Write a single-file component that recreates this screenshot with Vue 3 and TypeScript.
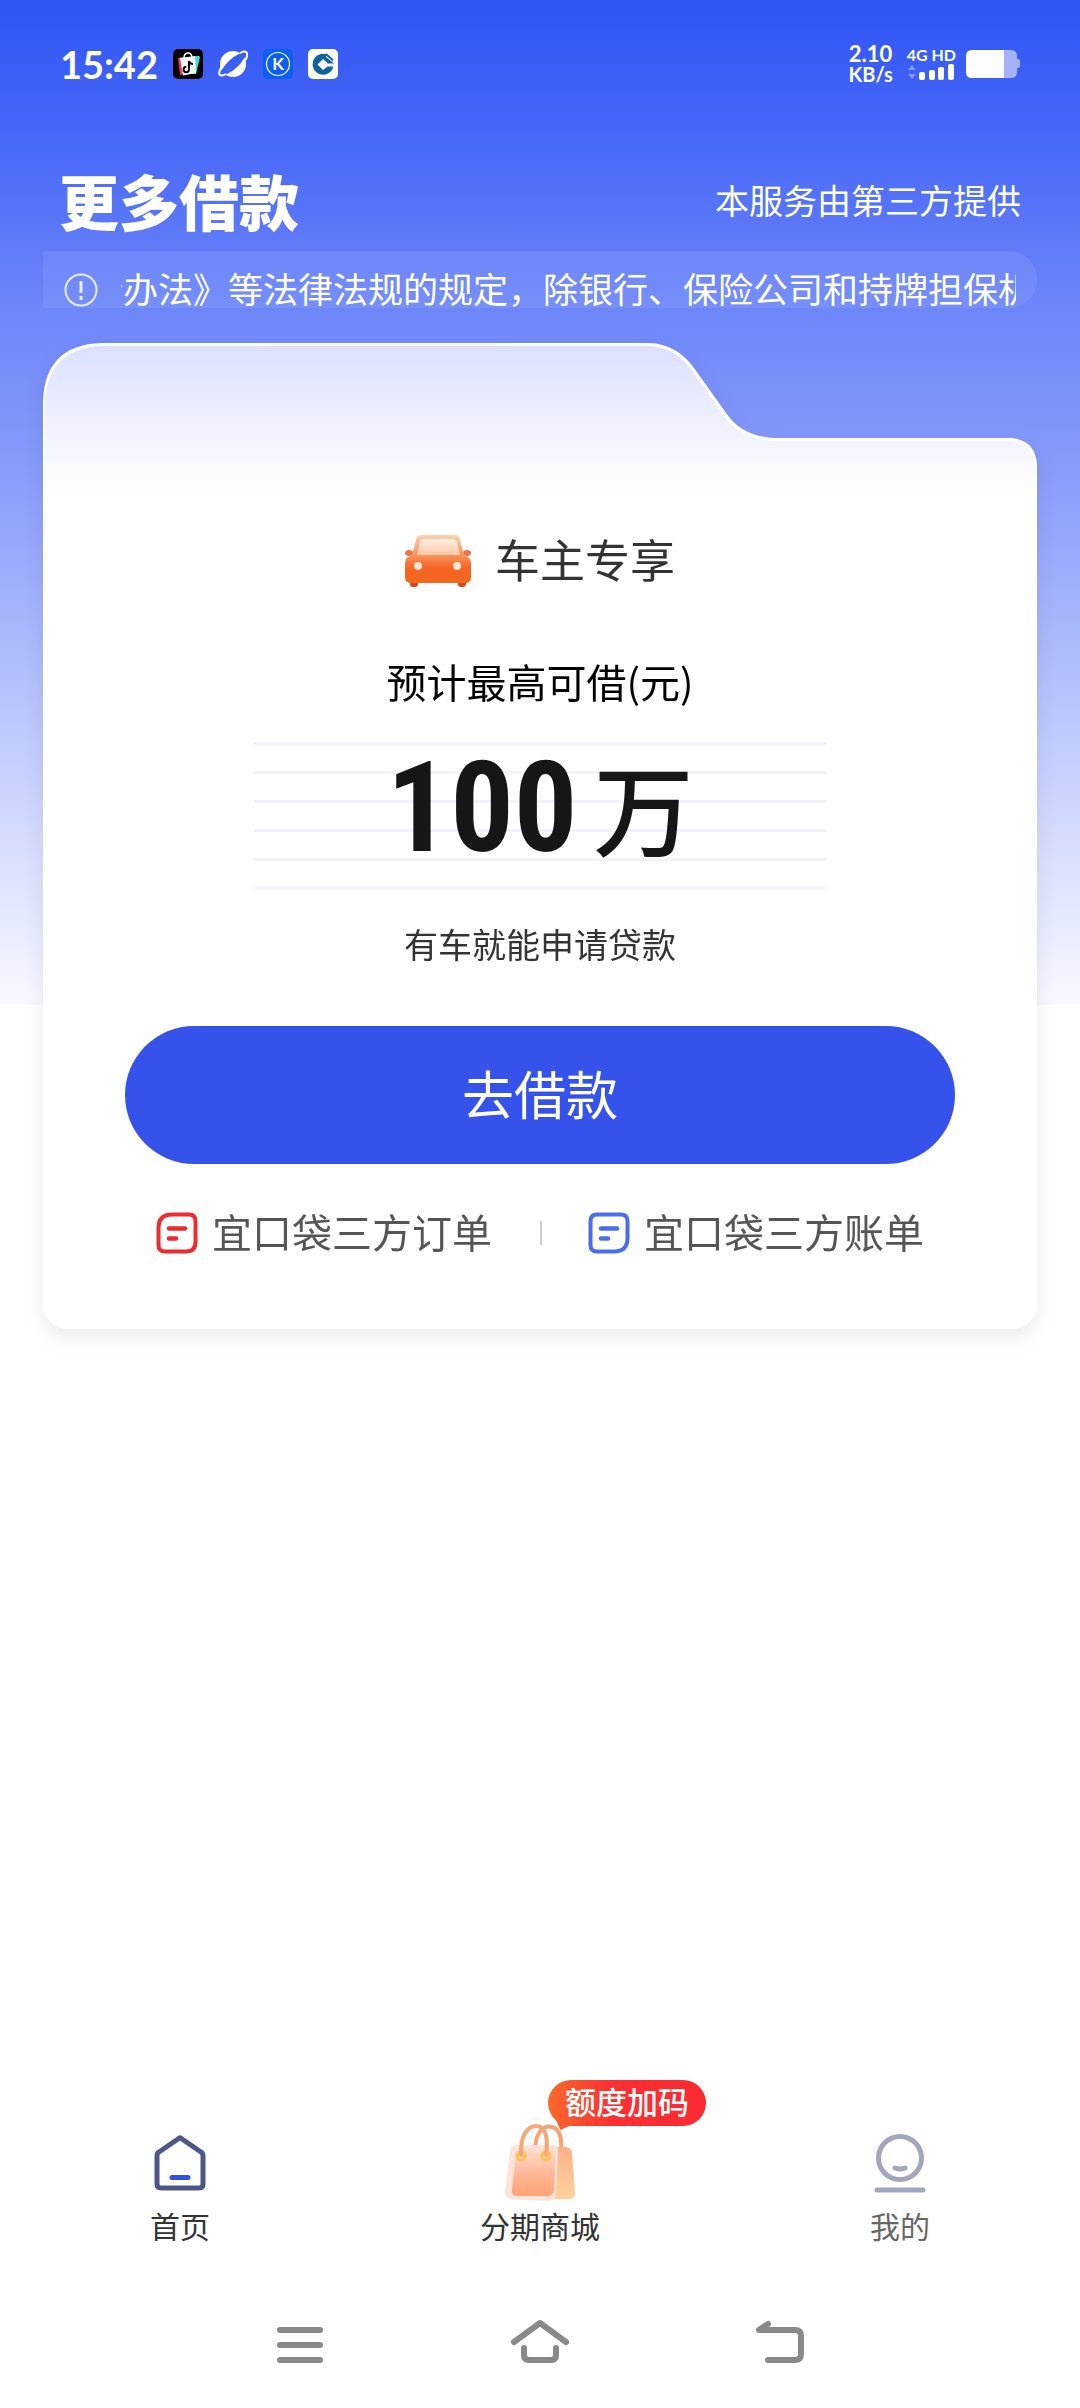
<script setup lang="ts">
interface RecordLink {
  label: string
  color: string
  outline: string
}

const notice = '行办法》等法律法规的规定，除银行、保险公司和持牌担保机构'

const links: RecordLink[] = [
  {
    label: '宜口袋三方订单',
    color: '#ee2a2e',
    outline: 'M16 2.500H33Q39.500 2.500 39.500 9V30Q39.500 39.500 30 39.500H9Q2.500 39.500 2.500 33V16Q2.500 2.500 16 2.500Z',
  },
  {
    label: '宜口袋三方账单',
    color: '#4a6df0',
    outline: 'M9 2.500H33Q39.500 2.500 39.500 9V26Q39.500 39.500 26 39.500H9Q2.500 39.500 2.500 33V9Q2.500 2.500 9 2.500Z',
  },
]
</script>

<template>
  <div class="page">
    <header class="status">
      <div class="status-left">
        <span class="clock">15:42</span>
        <svg class="app" viewBox="0 0 30 30">
          <rect width="30" height="30" rx="5" fill="#000" />
          <path d="M5 9l5-1v17l-3 1z" fill="#f2375f" />
          <path d="M22 7h4l1 1-4 17h-4z" fill="#2de5e0" />
          <path d="M7 9l15-2 1 17-13 2.500z" fill="#fff" />
          <path d="M11 9c0-6 7-7 8-1" fill="none" stroke="#fff" stroke-width="1.500" />
          <path d="M16 12v8.500a2.700 2.700 0 1 1-2.700-2.700M16 12c.5 2 2 3 4 3" fill="none" stroke="#000" stroke-width="2" />
        </svg>
        <svg class="app" viewBox="0 0 30 30">
          <circle cx="15" cy="15" r="13" fill="#fff" />
          <ellipse cx="15" cy="15" rx="15" ry="5" transform="rotate(-42 15 15)" fill="#3a5ff6" />
          <path d="M4 17C-1 25 1 29 8 25M22 4C29 0 32 5 26 13" fill="none" stroke="#fff" stroke-width="2" />
        </svg>
        <svg class="app" viewBox="0 0 30 30">
          <rect width="30" height="30" rx="5" fill="#0a5ff2" />
          <circle cx="15" cy="15" r="11.500" fill="none" stroke="#fff" stroke-width="1.200" />
          <text x="15" y="21" text-anchor="middle" font-size="17" font-weight="700" fill="#fff">K</text>
        </svg>
        <svg class="app" viewBox="0 0 30 30">
          <rect width="30" height="30" rx="5" fill="#fff" />
          <path d="M19 5.500A10.500 10.500 0 1 0 25.300 17.500H19.500L15 21 9.500 15.500 15 10l5 4.500H26L18 8z" fill="#10629f" />
          <path d="M18 5l7 6.500" stroke="#10629f" stroke-width="2" />
        </svg>
      </div>
      <div class="status-right">
        <div class="speed"><span class="speed-num">2.10</span><span class="speed-unit">KB/s</span></div>
        <div class="signal">
          <span class="network">4G HD</span>
          <svg width="48" height="18" viewBox="0 0 48 18">
            <path d="M1 7l4-5 4 5zM1 11h8l-4 5z" fill="#8398fa" />
            <g fill="#fff">
              <rect x="12" y="9" width="6" height="8" rx="2" />
              <rect x="22" y="7" width="6" height="10" rx="2" />
              <rect x="31" y="4" width="6" height="13" rx="2" />
              <rect x="41" y="1" width="6" height="16" rx="2" />
            </g>
          </svg>
        </div>
        <svg width="54" height="28" viewBox="0 0 54 28">
          <path d="M38 0h7q6 0 6 6v3h1q2 0 2 2v5q0 2-2 2h-1v4q0 6-6 6h-7z" fill="#a3b2fb" />
          <path d="M6 0h32v28H6q-6 0-6-6V6q0-6 6-6z" fill="#fff" />
        </svg>
      </div>
    </header>

    <div class="heading">
      <h1>更多借款</h1>
      <span class="provider">本服务由第三方提供</span>
    </div>

    <div class="notice">
      <svg width="34" height="34" viewBox="0 0 34 34" fill="none" stroke="#e6ebff" stroke-width="2">
        <circle cx="17" cy="17" r="15.500" />
        <path d="M17 8v12M17 23v4" stroke-width="3" />
      </svg>
      <p class="marquee">{{ notice }}</p>
    </div>

    <main class="card">
      <svg class="card-top" viewBox="0 0 994 160" preserveAspectRatio="none">
        <defs>
          <linearGradient id="tabFill" x1="0" y1="0" x2="0" y2="1">
            <stop offset="0" stop-color="#dbe0fe" />
            <stop offset="0.500" stop-color="#eff1fe" />
            <stop offset="0.950" stop-color="#fff" />
          </linearGradient>
        </defs>
        <path
          d="M0 160V58Q2 2 58 0H606Q634 1 651 25L686 74Q702 94 732 95H968Q992 97 994 121V160Z"
          fill="#fff"
        />
        <path
          d="M2 160V59Q5 5 59 3H605Q632 4 648 26L683 76Q701 97 732 98H967Q989 100 992 122V160Z"
          fill="url(#tabFill)"
        />
      </svg>
      <div class="card-body">
        <div class="product">
          <svg width="66" height="54" viewBox="0 0 66 54">
            <defs>
              <linearGradient id="carBody" x1="0" y1="0" x2="0" y2="1">
                <stop offset="0" stop-color="#fbd3b0" />
                <stop offset="0.450" stop-color="#f98d55" />
                <stop offset="0.700" stop-color="#f76323" />
                <stop offset="1" stop-color="#f2671d" />
              </linearGradient>
              <linearGradient id="carGlass" x1="0" y1="0" x2="0" y2="1">
                <stop offset="0" stop-color="#fff0e2" />
                <stop offset="1" stop-color="#fdc7a6" />
              </linearGradient>
            </defs>
            <rect x="5" y="44" width="8" height="9" rx="3" fill="#d9481a" />
            <rect x="53" y="44" width="8" height="9" rx="3" fill="#d9481a" />
            <ellipse cx="4" cy="19" rx="4" ry="3" fill="#e87446" />
            <ellipse cx="62" cy="19" rx="4" ry="3" fill="#e87446" />
            <path d="M17 1h32q5 0 6 5l4 15q7 2 7 8v14q0 6-6 6H6q-6 0-6-6V29q0-6 7-8l4-15q1-5 6-5z" fill="url(#carBody)" />
            <path d="M18 5h30q3 0 4 3l3 13H12l3-13q1-3 3-3z" fill="url(#carGlass)" />
            <circle cx="13" cy="32" r="4" fill="#ffe7d4" />
            <circle cx="52" cy="32" r="4" fill="#ffe7d4" />
          </svg>
          <h2>车主专享</h2>
        </div>
        <p class="caption">预计最高可借(元)</p>
        <p class="amount"><strong>100</strong><span>万</span></p>
        <p class="hint">有车就能申请贷款</p>
        <button class="primary" type="button">去借款</button>
        <nav class="records">
          <a v-for="link in links" :key="link.label" href="#">
            <svg width="42" height="42" viewBox="0 0 42 42" fill="none" :stroke="link.color" stroke-linecap="round">
              <path :d="link.outline" stroke-width="4" />
              <path d="M13 16.500H29M13 26.500H20" stroke-width="4.500" />
            </svg>
            <span>{{ link.label }}</span>
          </a>
        </nav>
      </div>
    </main>

    <footer>
      <nav class="tabs">
        <a class="tab" href="#">
          <span class="tab-icon">
            <svg width="52" height="56" viewBox="0 0 52 56" fill="none" stroke-linecap="round" stroke-linejoin="round">
              <path d="M24 4Q26 2 28 4L47 17Q49 18 49 21V49Q49 53 45 53H7Q3 53 3 49V21Q3 18 5 17Z" stroke="#4a5788" stroke-width="5" />
              <path d="M18 42.500H34" stroke="#3050e8" stroke-width="5" />
            </svg>
          </span>
          <span>首页</span>
        </a>
        <a class="tab" href="#">
          <span class="tab-icon">
            <svg width="72" height="78" viewBox="0 0 72 78">
              <defs>
                <linearGradient id="bagBack" x1="0" y1="0" x2="0" y2="1">
                  <stop offset="0" stop-color="#ffb08c" />
                  <stop offset="1" stop-color="#ffd29a" />
                </linearGradient>
                <linearGradient id="bagFront" x1="0" y1="0" x2="0" y2="1">
                  <stop offset="0" stop-color="#ffe0d3" />
                  <stop offset="0.600" stop-color="#ffb490" />
                  <stop offset="1" stop-color="#ffa377" />
                </linearGradient>
              </defs>
              <path d="M31 25C32 7 40 1 48 3C56 5 58 15 57 27" fill="none" stroke="#f5a377" stroke-width="4" />
              <path d="M20 23H62q5 0 6 6l3 40q0 6-6 6H20z" fill="url(#bagBack)" />
              <path d="M12 21H50q4 0 4 5l-2 44q-1 7-8 7L8 75q-8-1-7-8L6 27q1-6 6-6z" fill="#ffe3d8" />
              <path d="M16 23H50q2 0 2 3l-2 40q-1 6-7 6H14q-7 0-6-6l4-38q1-5 4-5z" fill="url(#bagFront)" />
              <circle cx="17" cy="32" r="4" fill="none" stroke="#ffc44d" stroke-width="3" />
              <circle cx="42" cy="32" r="4" fill="none" stroke="#ffc44d" stroke-width="3" />
              <path d="M17 31C16 11 24 2 32 2C40 2 45 11 42 31" fill="none" stroke="#f8a677" stroke-width="4" stroke-linecap="round" />
            </svg>
          </span>
          <span>分期商城</span>
          <span class="badge">额度加码</span>
        </a>
        <a class="tab muted" href="#">
          <span class="tab-icon">
            <svg width="52" height="60" viewBox="0 0 52 60" fill="none" stroke="#a2a5bd" stroke-width="5" stroke-linecap="round">
              <circle cx="26" cy="25" r="21.500" />
              <path d="M21 35Q26 37 31 35M3 57H49" />
            </svg>
          </span>
          <span>我的</span>
        </a>
      </nav>
      <div class="system">
        <button type="button" aria-label="菜单">
          <svg width="60" height="48" viewBox="0 0 60 48"><path d="M10 11H50M10 26H50M10 41H50" /></svg>
        </button>
        <button type="button" aria-label="主屏幕">
          <svg width="60" height="48" viewBox="0 0 60 48"><path d="M4 23L30 4L56 23M14 29V36Q14 41 19 41H41Q46 41 46 36V29" /></svg>
        </button>
        <button type="button" aria-label="返回">
          <svg width="60" height="48" viewBox="0 0 60 48"><path d="M18 5L9 11H45Q51 11 51 17V35Q51 41 45 41H18" /></svg>
        </button>
      </div>
    </footer>
  </div>
</template>

<style>
body {
  background: #fff;
}
</style>

<style scoped>
* {
  box-sizing: border-box;
}

.page {
  display: flex;
  flex-direction: column;
  min-height: 100vh;
  background: linear-gradient(#2f54f4 0, #4a6af8 150px, #6f88f9 320px, #8a9dfb 480px, #f8f9ff 1005px, #fff 1005px);
  font-family: "Noto Sans CJK SC", sans-serif;
  color: #333;
}

h1,
h2,
p {
  margin: 0;
  font-weight: 400;
}

svg {
  display: block;
  flex: none;
}

a {
  color: inherit;
  text-decoration: none;
}

button {
  padding: 0;
  border: 0;
  background: none;
  font-family: inherit;
}

.status {
  display: flex;
  align-items: center;
  justify-content: space-between;
  height: 128px;
  padding: 0 60px;
  color: #fff;
  font-family: Lato, sans-serif;
}

.status-left {
  display: flex;
  align-items: center;
  gap: 15px;
}

.clock {
  font-size: 38px;
  font-weight: 700;
  line-height: 40px;
}

.app {
  width: 30px;
  height: 30px;
}

.status-right {
  display: flex;
  align-items: center;
  gap: 10px;
}

.speed {
  display: flex;
  flex-direction: column;
  align-items: center;
  margin-right: 4px;
  font-weight: 700;
}

.speed-num {
  font-size: 22px;
  line-height: 20px;
}

.speed-unit {
  font-size: 20px;
  line-height: 20px;
}

.network {
  display: block;
  font-size: 16px;
  font-weight: 700;
  line-height: 16px;
}

.heading {
  display: flex;
  align-items: center;
  justify-content: space-between;
  height: 123px;
  padding: 20px 59px 0;
  color: #fff;
}

h1 {
  font-size: 60px;
  font-weight: 900;
  line-height: 72px;
}

.provider {
  font-size: 34px;
  line-height: 40px;
}

.notice {
  display: flex;
  align-items: center;
  gap: 23px;
  margin: 0 43px;
  padding: 20px 21px 0;
  border-radius: 0 28px 28px 0;
  background: rgba(255, 255, 255, 0.08);
  color: #fff;
}

.marquee {
  flex: 1;
  min-width: 0;
  overflow: hidden;
  padding-bottom: 4px;
  font-size: 35px;
  line-height: 33px;
  text-indent: -33px;
  white-space: nowrap;
}

.card {
  margin: 35px 43px 0;
  filter: drop-shadow(0 8px 10px rgba(0, 0, 0, 0.08));
}

.card-top {
  width: 100%;
  height: 160px;
}

.card-body {
  display: flex;
  flex-direction: column;
  align-items: center;
  padding: 28px 82px 68px;
  border-radius: 0 0 24px 24px;
  background: #fff;
}

.product {
  display: flex;
  align-items: center;
  gap: 24px;
}

h2 {
  padding-bottom: 4px;
  font-size: 45px;
  line-height: 56px;
}

.caption {
  margin-top: 64px;
  color: #000;
  font-size: 40px;
  line-height: 52px;
}

.amount {
  display: flex;
  align-items: center;
  justify-content: center;
  gap: 16px;
  width: 69%;
  height: 147px;
  margin-top: 35px;
  padding-bottom: 16px;
  background: repeating-linear-gradient(#f2f2fb 0, #f2f2fb 3px, transparent 3px, transparent 29px);
  color: #161616;
  line-height: 130px;
}

.amount strong {
  font-family: "Roboto Condensed", Roboto, sans-serif;
  font-size: 126px;
  font-weight: 700;
}

.amount span {
  padding-bottom: 4px;
  font-size: 100px;
  font-weight: 500;
}

.hint {
  margin-top: 33px;
  font-size: 34px;
  line-height: 44px;
}

.primary {
  width: 100%;
  height: 138px;
  margin-top: 60px;
  padding-bottom: 6px;
  border-radius: 69px;
  background: #3552eb;
  color: #fff;
  font-size: 52px;
}

.records {
  display: flex;
  justify-content: center;
  margin-top: 41px;
  color: #555;
  font-size: 40px;
  line-height: 52px;
  white-space: nowrap;
}

.records a {
  display: flex;
  align-items: center;
  gap: 14px;
}

.records span {
  padding-bottom: 4px;
}

.records a + a {
  margin-left: 48px;
  padding-left: 48px;
  background: linear-gradient(#ccc, #ccc) left center / 2px 24px no-repeat;
}

footer {
  margin-top: auto;
}

.tabs {
  display: flex;
  padding-bottom: 33px;
}

.tab {
  position: relative;
  display: flex;
  flex: 1;
  flex-direction: column;
  align-items: center;
  gap: 2px;
  font-size: 30px;
  line-height: 40px;
}

.muted {
  color: #666;
}

.tab-icon {
  display: flex;
  align-items: center;
  height: 80px;
}

.badge {
  position: absolute;
  top: -43px;
  left: calc(50% + 8px);
  padding: 0 17px 4px;
  border-radius: 23px;
  background: linear-gradient(90deg, #fa6a2c, #fb3030 40%, #fb2a32);
  color: #fff;
  font-size: 31px;
  font-weight: 500;
  line-height: 42px;
  white-space: nowrap;
}

.badge::after {
  content: "";
  position: absolute;
  top: 40px;
  left: 8px;
  width: 15px;
  height: 10px;
  background: #fb5a2d;
  clip-path: polygon(0 0, 100% 50%, 30% 100%);
}

.system {
  display: flex;
  align-items: center;
  height: 130px;
  padding: 0 calc(100% / 6);
}

.system button {
  display: flex;
  flex: 1;
  justify-content: center;
}

.system path {
  fill: none;
  stroke: #898989;
  stroke-width: 6;
  stroke-linecap: round;
  stroke-linejoin: round;
}
</style>
